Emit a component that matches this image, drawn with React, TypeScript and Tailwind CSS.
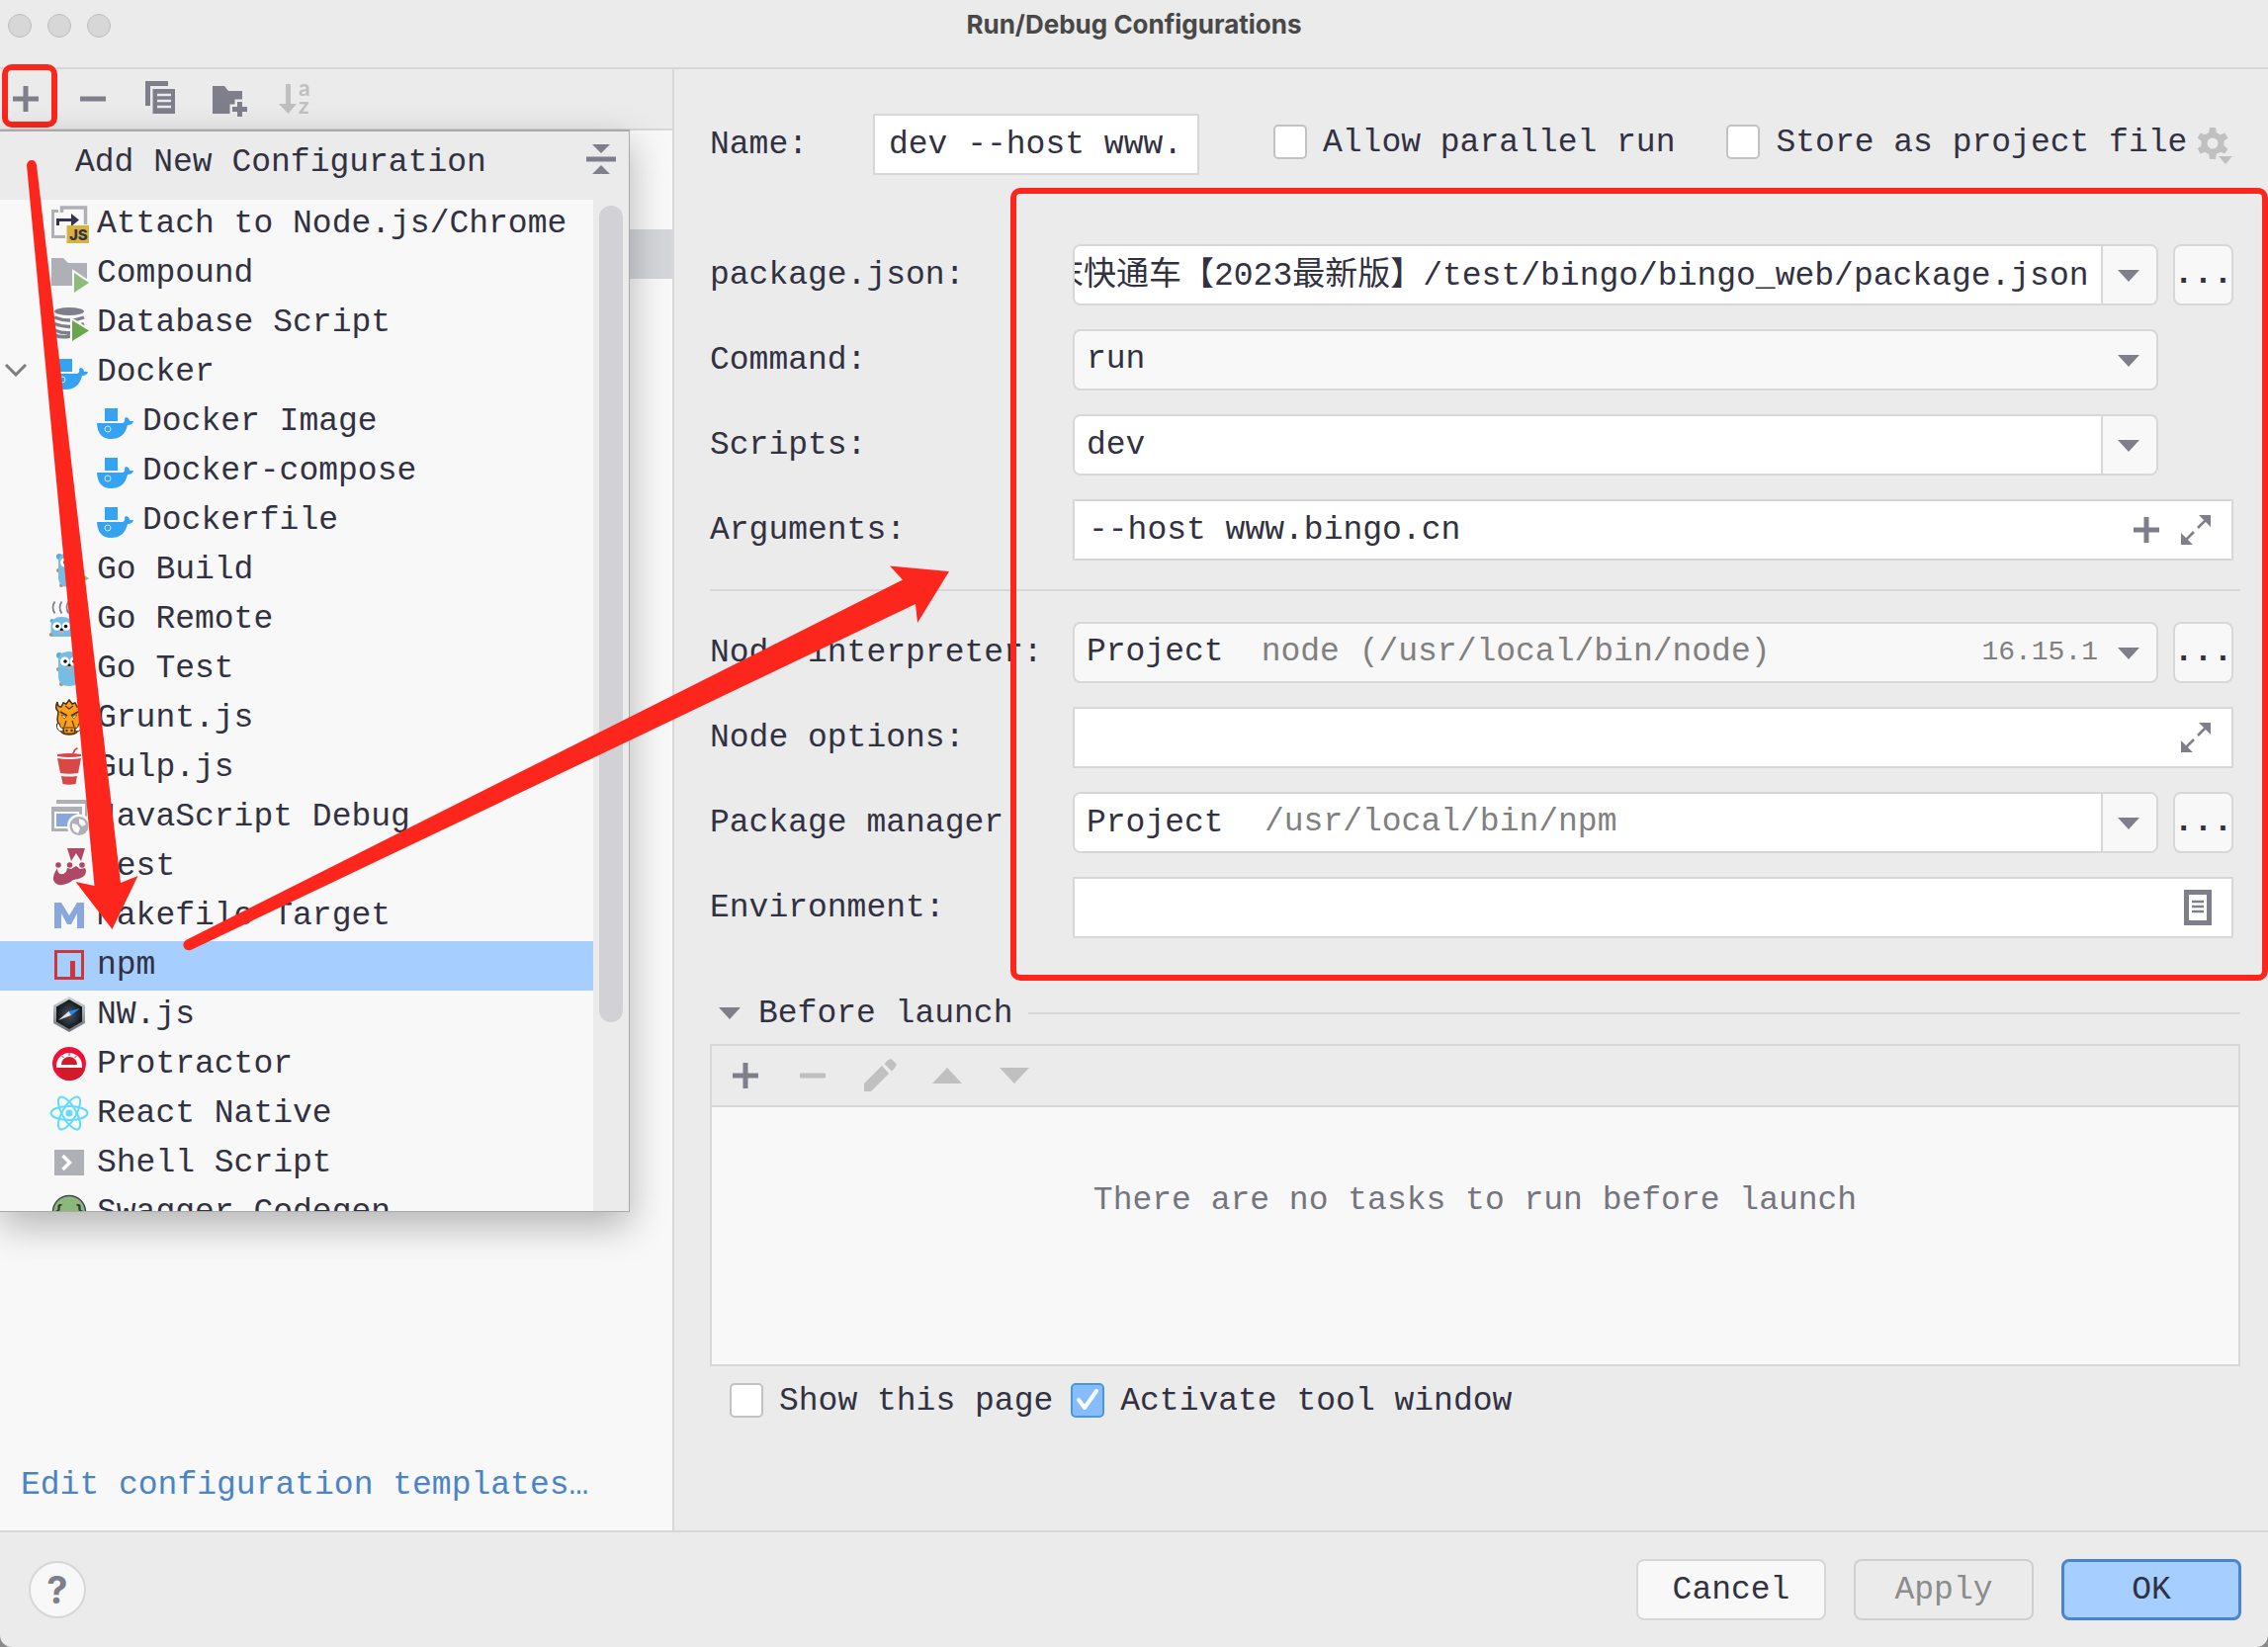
import { useEffect, useRef } from "react";
import type { ReactNode } from "react";

const ICON = "#7f7f8c";
const MUTED = "#c0c0c0";
const RED = "#fc261c";

/* ---------- toolbar glyphs ---------- */

function PlusIcon({ color = ICON }: { color?: string }) {
  return (
    <svg viewBox="0 0 36 36" className="h-9 w-9" aria-hidden="true">
      <path d="M15.500 5h5v10.500h10.500v5H20.500v10.500h-5V20.500H5v-5h10.500z" fill={color} />
    </svg>
  );
}

function MinusIcon({ color = ICON }: { color?: string }) {
  return (
    <svg viewBox="0 0 36 36" className="h-9 w-9" aria-hidden="true">
      <path d="M5 15.500h26v5H5z" fill={color} />
    </svg>
  );
}

function CopyIcon() {
  return (
    <svg viewBox="0 0 36 36" className="h-9 w-9" aria-hidden="true">
      <path d="M3 0h23v5H8v20H3z" fill={ICON} />
      <path d="M10.500 8H33v25H10.500z" fill={ICON} />
      <path d="M15 14h14M15 20h14M15 26h14" stroke="#ebebeb" strokeWidth="2.500" />
    </svg>
  );
}

function FolderPlusIcon() {
  return (
    <svg viewBox="0 0 36 36" className="h-9 w-9 overflow-visible" aria-hidden="true">
      <path d="M3 5h12l4 5h14v23H3z" fill={ICON} />
      <path d="M28 21h5v5h5v5h-5v5h-5v-5h-5v-5h5z" fill={ICON} stroke="#ebebeb" strokeWidth="5" paintOrder="stroke" />
    </svg>
  );
}

function SortIcon() {
  return (
    <svg viewBox="0 0 36 36" className="h-9 w-9 overflow-visible" aria-hidden="true">
      <path d="M9 3h5v20h6L11.500 33 2 23h7z" fill={MUTED} />
      <text x="22" y="15" fontSize="23" fontWeight="700" fontFamily="Lato, sans-serif" fill={MUTED}>a</text>
      <text x="22" y="33" fontSize="23" fontWeight="700" fontFamily="Lato, sans-serif" fill={MUTED}>z</text>
    </svg>
  );
}

function PencilIcon() {
  return (
    <svg viewBox="0 0 36 36" className="h-9 w-9" aria-hidden="true">
      <path d="M2 34v-8L20 8l7 8L9 34zM22.500 6l3.500-3.500q2.500-2.500 5 0L33.500 5q2 2 0 4.500L30 13.500z" fill={MUTED} />
    </svg>
  );
}

function Triangle({ up = false, color = ICON, big = false }: { up?: boolean; color?: string; big?: boolean }) {
  return (
    <svg viewBox="0 0 30 16" className={big ? "h-4 w-[30px]" : "h-3 w-[22px]"} preserveAspectRatio="none" aria-hidden="true">
      <path d={up ? "M0 16L15 0l15 16z" : "M0 0h30L15 16z"} fill={color} />
    </svg>
  );
}

function GearIcon() {
  const teeth = [0, 60, 120, 180, 240, 300];
  return (
    <svg viewBox="0 0 38 38" className="h-[38px] w-[38px]" aria-hidden="true">
      <g fill={MUTED}>
        {teeth.map((a) => (
          <path key={a} d="M12 8L13 1h6l1 7z" transform={`rotate(${a} 16 17)`} />
        ))}
        <path fillRule="evenodd" d="M16 5.500a11.500 11.500 0 1 1 0 23a11.500 11.500 0 0 1 0-23zM16 11.500a5.500 5.500 0 1 0 0 11a5.500 5.500 0 0 0 0-11z" />
        <path d="M20 27h18l-9 11z" fill="#ebebeb" />
        <path d="M22 30h14l-7 8z" />
      </g>
    </svg>
  );
}

function ExpandIcon() {
  return (
    <svg viewBox="0 0 32 32" className="h-8 w-8" aria-hidden="true">
      <path d="M19 1h12v12zM1 19v12h12z" fill={ICON} />
      <path d="M18 14L26 6M14 18L6 26" stroke={ICON} strokeWidth="2.500" />
    </svg>
  );
}

function DocumentIcon() {
  return (
    <svg viewBox="0 0 28 36" className="h-9 w-7" aria-hidden="true">
      <path d="M2.500 2.500h23v31h-23z" fill="none" stroke={ICON} strokeWidth="5" />
      <path d="M8 12h12M8 17h12M8 22h12" stroke={ICON} strokeWidth="2.500" />
    </svg>
  );
}

/* ---------- configuration type icons, 40 x 40 ---------- */

const play = (x: number, y: number, w: number, h: number, fill: string) => (
  <path d={`M${x} ${y}l${w} ${h / 2}l${-w} ${h / 2}z`} fill={fill} stroke="#f8f8f8" strokeWidth="4" paintOrder="stroke" />
);

const docker = (
  <g fill="#35a2f2">
    <path d="M10 6h13v13H10z" />
    <path d="M2 21h26q3-1 2-5l2-1q3 1 3 4h4q-1 4-6 4Q30 37 16 37 3 37 2 21z" />
    <circle cx="13" cy="27" r="3" fill="none" stroke="#d5ebfc" strokeWidth="1" />
  </g>
);

const gopher = (
  <g>
    <circle cx="10" cy="6" r="3" fill="#5ba9d6" />
    <circle cx="30" cy="6" r="3" fill="#5ba9d6" />
    <circle cx="9" cy="20" r="2" fill="#b88b70" />
    <circle cx="12" cy="35" r="2" fill="#b88b70" />
    <path d="M9 12Q9 2 20 2t11 10v15q0 10-11 10T9 27z" fill="#77bce4" />
    <circle cx="15.500" cy="12" r="4.500" fill="#fff" />
    <circle cx="25" cy="12" r="4.500" fill="#fff" />
    <circle cx="16" cy="12" r="1.800" fill="#111" />
    <circle cx="25" cy="12" r="1.800" fill="#111" />
    <circle cx="20" cy="16" r="1.500" fill="#111" />
    <circle cx="20" cy="18.500" r="1.800" fill="#d8a88c" />
  </g>
);

const icons: Record<string, ReactNode> = {
  attach: (
    <g>
      <path d="M9 6.500H3.500v26H16" fill="none" stroke="#afb0b6" strokeWidth="3" />
      <path d="M12.500 8V3h24v17" fill="none" stroke="#afb0b6" strokeWidth="3.500" />
      <path d="M8.500 21v-5.500H24" fill="none" stroke="#33334a" strokeWidth="3" />
      <path d="M22 9l8 6.500-8 6.500z" fill="#33334a" />
      <path d="M17.500 21H40v18H17.500z" fill="#d6b240" />
      <text x="20" y="36" fontSize="15" fontWeight="800" fontFamily="Inter, sans-serif" fill="#33334a">JS</text>
    </g>
  ),
  compound: (
    <g>
      <path d="M2 4h12l5 5h19v23H2z" fill="#afb0b6" />
      {play(25, 19, 15, 20, "#90bb7d")}
    </g>
  ),
  database: (
    <g>
      <ellipse cx="20" cy="8" rx="15" ry="4" fill={ICON} />
      <path d="M5 14q15 6 30 0M5 20.500q15 6 30 0M5 27q8 3.500 18 2.500M5 32q8 3 16 1" fill="none" stroke={ICON} strokeWidth="3.500" />
      {play(23, 17, 17, 21, "#6ba54e")}
    </g>
  ),
  docker,
  goBuild: (
    <g>
      {gopher}
      {play(25, 18, 15, 20, "#90bb7d")}
    </g>
  ),
  goRemote: (
    <g>
      <path d="M5.500 1.500q-4 6 0 12M12.500 1.500q-4 6 0 12M19.500 1.500q-4 6 0 12" fill="none" stroke={ICON} strokeWidth="1.800" />
      <circle cx="2.500" cy="21" r="2" fill="#5ba9d6" />
      <path d="M1.500 37V26q0-9 11-9t11 9v11z" fill="#77bce4" />
      <circle cx="1.500" cy="35" r="1.800" fill="#b88b70" />
      <circle cx="7.500" cy="26.500" r="4.300" fill="#fff" />
      <circle cx="17" cy="26.500" r="4.300" fill="#fff" />
      <circle cx="8" cy="26.500" r="1.800" fill="#111" />
      <circle cx="16.500" cy="26.500" r="1.800" fill="#111" />
      <circle cx="12.300" cy="30" r="1.500" fill="#111" />
      <circle cx="12.300" cy="32.500" r="1.800" fill="#d8a88c" />
    </g>
  ),
  goTest: gopher,
  grunt: (
    <g>
      <path d="M8 3q0 5 4 5l2-4 3 1 3-4 3 4 3-1 2 4q4 0 4-5 3 6-1 10l1 8-2 8q-1 7-10 7t-10-7l-2-8 1-8Q5 9 8 3z" fill="#fa9f1c" stroke="#4a3312" strokeWidth="1.500" />
      <path d="M11 13l7 4M29 13l-7 4" stroke="#4a3312" strokeWidth="1.800" />
      <path d="M12 16l5 2-2 2zM28 16l-5 2 2 2z" fill="#fff" stroke="#4a3312" strokeWidth=".6" />
      <path d="M16 7l4 3 4-3M17 22l-2 6M23 22l2 6" fill="none" stroke="#4a3312" strokeWidth="1.200" />
      <path d="M7.500 25q-1 8 6 8l1-3q-4 0-4-5zM32.500 25q1 8-6 8l-1-3q4 0 4-5z" fill="#fff" stroke="#4a3312" strokeWidth="1" />
      <path d="M14 29h12l-1 6H15z" fill="#fa9f1c" stroke="#4a3312" strokeWidth="1.200" />
      <circle cx="17.500" cy="32" r="1.200" fill="#4a3312" />
      <circle cx="22.500" cy="32" r="1.200" fill="#4a3312" />
    </g>
  ),
  gulp: (
    <g fill="#da4747">
      <path d="M23 5l2-4 3-2 1 1.500-2.500 1.500-1.500 3z" />
      <path d="M8 6q12-2 24 0v2q-12 2-24 0z" />
      <path d="M8 10q12 2 24 0l-3 15q-9 1.500-18 0z" />
      <path d="M12 28q8 1 16 0l-1.500 8q-6.500 1.500-13 0z" />
    </g>
  ),
  jsDebug: (
    <g>
      <path d="M7 2h31v22h-2V6H7z" fill="#afb0b6" />
      <path d="M2 9h31v25H2zM5 14v17h25V14z" fill="#afb0b6" fillRule="evenodd" />
      <path d="M7 16h21v13H7z" fill="#89a6dd" />
      <circle cx="30" cy="28.500" r="12" fill="#f8f8f8" />
      <circle cx="30" cy="28.500" r="9.500" fill="#afb0b6" />
      <path d="M23 26l5 1 3 4-2 5-4-2-2-4zM30 21l5 2 2 4-4 2-3-3z" fill="#f8f8f8" />
    </g>
  ),
  jest: (
    <g fill="#b04766">
      <path d="M18 1h18l-4 13-5-8-5 8z" />
      <circle cx="9" cy="18" r="2.800" />
      <circle cx="20.500" cy="18" r="2.800" />
      <circle cx="33" cy="18" r="2.800" />
      <path d="M8 21Q3 29 4 33q2 6 9 5 7-1 11-5 9-1 12-5 2-4 0-7l-5 1-4-3-5 3-4-1q-1 7-7 6-3-1-3-6z" />
    </g>
  ),
  makefile: <path d="M5 32V6h7l8 13 8-13h7v26h-7V17l-6 11h-4l-6-11v15z" fill="#89a6dd" />,
  npm: (
    <g>
      <path d="M6.500 5.500h27v27h-27z" fill="none" stroke="#cb3837" strokeWidth="3" />
      <path d="M21 15h5v16h-5z" fill="#cb3837" />
    </g>
  ),
  nw: (
    <g>
      <defs>
        <linearGradient id="nwEdge" x1="0" y1="0" x2="0" y2="1">
          <stop offset="0" stopColor="#d4d6d8" />
          <stop offset="1" stopColor="#6f7276" />
        </linearGradient>
        <radialGradient id="nwFace">
          <stop offset="0" stopColor="#4b5563" />
          <stop offset="1" stopColor="#14171c" />
        </radialGradient>
      </defs>
      <path d="M20 1l16 9v18l-16 9-16-9V10z" fill="url(#nwEdge)" />
      <path d="M20 4l13 7.500v15L20 34 7 26.500v-15z" fill="url(#nwFace)" />
      <path d="M31 13l-9 7-2.500-4z" fill="#1d8bf5" />
      <path d="M9 25l10.500-9 2.500 4z" fill="#e2e4e6" />
    </g>
  ),
  protractor: (
    <g>
      <circle cx="20" cy="19" r="17" fill="#f01236" />
      <path d="M8 23h24l4 2q-4 11-16 11-4 0-7-2z" fill="#d31a2b" />
      <path d="M7 21a13 13 0 0 1 26 0v2H7z" fill="#fff" />
      <path d="M12 20a8 8 0 0 1 16 0z" fill="#d31a2b" />
      <path d="M20 8v3M12.500 11l2 2M27.500 11l-2 2" stroke="#f01236" strokeWidth="1" />
    </g>
  ),
  react: (
    <g fill="none" stroke="#61dafb" strokeWidth="2">
      <ellipse cx="20" cy="19" rx="18.500" ry="7" />
      <ellipse cx="20" cy="19" rx="18.500" ry="7" transform="rotate(60 20 19)" />
      <ellipse cx="20" cy="19" rx="18.500" ry="7" transform="rotate(120 20 19)" />
      <circle cx="20" cy="19" r="3.500" fill="#61dafb" stroke="none" />
    </g>
  ),
  shell: (
    <g>
      <path d="M5 6h30v26H5z" fill="#afb0b6" />
      <path d="M13.500 12l7 7-7 7" fill="none" stroke="#fff" strokeWidth="3.500" />
    </g>
  ),
  swagger: (
    <g>
      <circle cx="20" cy="19" r="16.500" fill="#8cb97b" stroke="#46464f" strokeWidth="1.500" />
      <text x="20" y="23" textAnchor="middle" fontSize="17" fontWeight="700" fontFamily="Liberation Sans, sans-serif" fill="#2f3a35">{"{...}"}</text>
    </g>
  ),
};

type Item = { label: string; icon: string; child?: boolean; open?: boolean };

const items: Item[] = [
  { label: "Attach to Node.js/Chrome", icon: "attach" },
  { label: "Compound", icon: "compound" },
  { label: "Database Script", icon: "database" },
  { label: "Docker", icon: "docker", open: true },
  { label: "Docker Image", icon: "docker", child: true },
  { label: "Docker-compose", icon: "docker", child: true },
  { label: "Dockerfile", icon: "docker", child: true },
  { label: "Go Build", icon: "goBuild" },
  { label: "Go Remote", icon: "goRemote" },
  { label: "Go Test", icon: "goTest" },
  { label: "Grunt.js", icon: "grunt" },
  { label: "Gulp.js", icon: "gulp" },
  { label: "JavaScript Debug", icon: "jsDebug" },
  { label: "Jest", icon: "jest" },
  { label: "Makefile Target", icon: "makefile" },
  { label: "npm", icon: "npm" },
  { label: "NW.js", icon: "nw" },
  { label: "Protractor", icon: "protractor" },
  { label: "React Native", icon: "react" },
  { label: "Shell Script", icon: "shell" },
  { label: "Swagger Codegen", icon: "swagger" },
];

function AddConfigurationPopup() {
  return (
    <div className="absolute top-[61px] left-0 z-10 flex h-[1095px] w-[637px] flex-col overflow-hidden border-t-2 border-r border-b border-[#a9a9ab] bg-[#ebebeb] shadow-[0_14px_36px_rgba(0,0,0,0.28)]">
      <div className="flex h-[69px] shrink-0 items-start justify-between pr-3 pl-[76px]">
        <h2 className="leading-[64px]">Add New Configuration</h2>
        <button type="button" aria-label="Collapse all" className="mt-3">
          <svg viewBox="0 0 32 32" className="h-8 w-8" aria-hidden="true">
            <path d="M7 1h18l-9 9zM7 31h18l-9-9zM1 13.500h30v5H1z" fill={ICON} />
          </svg>
        </button>
      </div>
      <div className="flex min-h-0 flex-1">
        <ul className="min-w-0 flex-1 overflow-hidden bg-[#f8f8f8]">
          {items.map((item) => (
            <li key={item.label}>
              <button
                type="button"
                className={`flex h-[50px] w-full items-center gap-2 text-left leading-[50px] whitespace-nowrap ${item.label === "npm" ? "bg-[#a6ceff]" : ""} ${item.child ? "pl-24" : item.open ? "pl-1" : "pl-[50px]"}`}
              >
                {item.open && (
                  <svg viewBox="0 0 24 14" className="mr-3.5 mb-1.5 h-3.5 w-6" aria-hidden="true">
                    <path d="M2 2l10 10L22 2" fill="none" stroke="#7d7d7d" strokeWidth="3" />
                  </svg>
                )}
                <svg viewBox="0 0 40 40" className="h-10 w-10 shrink-0 overflow-visible" aria-hidden="true">
                  {icons[item.icon]}
                </svg>
                {item.label}
              </button>
            </li>
          ))}
        </ul>
        <div className="w-9 shrink-0 pt-1.5">
          <div className="mx-auto h-[826px] w-6 rounded-full bg-[#d1d1d6]" />
        </div>
      </div>
    </div>
  );
}

/* ---------- form pieces ---------- */

function Check({ id, label, checked = false }: { id: string; label: string; checked?: boolean }) {
  return (
    <div className="flex items-center gap-4">
      <span className="relative flex h-[35px] w-[34px]">
        <input
          id={id}
          type="checkbox"
          defaultChecked={checked}
          className="h-full w-full appearance-none rounded-[5px] border-2 border-[#c2c2c2] bg-white checked:border-[#4b97dd] checked:bg-[#86bdff]"
        />
        {checked && (
          <svg viewBox="0 0 34 35" className="pointer-events-none absolute inset-0" aria-hidden="true">
            <path d="M8 17l6 8L26 8" fill="none" stroke="#fff" strokeWidth="4" strokeLinecap="round" strokeLinejoin="round" />
          </svg>
        )}
      </span>
      <label htmlFor={id} className="pt-1 whitespace-nowrap">{label}</label>
    </div>
  );
}

function Row({ id, label, more, full, children }: { id: string; label: string; more?: boolean; full?: boolean; children: ReactNode }) {
  return (
    <div className="flex h-[62px] items-center pr-[7px]">
      <label htmlFor={id} className="w-[367px] shrink-0 pt-0.5 whitespace-nowrap">{label}</label>
      <div className={`relative flex h-full min-w-0 flex-1 items-center border-2 border-[#d7d7d7] ${full ? "bg-white" : "overflow-hidden rounded-lg bg-[#f8f8f8]"} ${full || more ? "" : "mr-[76px]"}`}>
        {children}
      </div>
      {more && (
        <button type="button" aria-label={`Browse ${label}`} className="ml-[15px] h-full w-[61px] overflow-hidden rounded-lg border-2 border-[#d7d7d7] bg-[#f8f8f8] font-bold">
          <span className="flex justify-center">...</span>
        </button>
      )}
    </div>
  );
}

function DropButton({ label }: { label: string }) {
  return (
    <button type="button" aria-label={label} className="flex h-full w-14 shrink-0 items-center justify-center border-l-2 border-[#d7d7d7] bg-[#f8f8f8] pt-0.5 pr-0.5">
      <Triangle />
    </button>
  );
}

function ToolButton({ label, children }: { label: string; children: ReactNode }) {
  return (
    <button type="button" aria-label={label} className="flex h-9 w-9 items-center justify-center">
      {children}
    </button>
  );
}

export default function App() {
  const pathRef = useRef<HTMLInputElement>(null);
  useEffect(() => {
    if (pathRef.current) pathRef.current.scrollLeft = pathRef.current.scrollWidth;
  }, []);

  return (
    <div className="bg-[#8a8a8a]">
      <div className="relative flex min-h-screen flex-col overflow-hidden rounded-b-xl bg-[#ebebeb] font-['Liberation_Mono','Noto_Sans_CJK_SC',monospace] text-[33px] leading-[50px] text-[#313142]">
        <header className="relative flex h-[70px] shrink-0 items-start justify-center border-b-2 border-[#d7d7d7]">
          <div className="absolute top-3.5 left-2 flex gap-4">
            <span className="h-6 w-6 rounded-full border border-[#bebebe] bg-[#d7d7d7]" />
            <span className="h-6 w-6 rounded-full border border-[#bebebe] bg-[#d7d7d7]" />
            <span className="h-6 w-6 rounded-full border border-[#bebebe] bg-[#d7d7d7]" />
          </div>
          <h1 className="font-['Inter',sans-serif] text-[26px] font-bold text-[#484848]">Run/Debug Configurations</h1>
        </header>

        <main className="flex flex-1">
          <aside className="relative flex w-[682px] shrink-0 flex-col border-r-2 border-[#d7d7d7] bg-[#f8f8f8]">
            <div className="flex h-[62px] items-center gap-8 border-b-2 border-[#d7d7d7] bg-[#ebebeb] pl-2">
              <div className="relative flex">
                <ToolButton label="Add New Configuration"><PlusIcon /></ToolButton>
                <span className="pointer-events-none absolute -top-[17px] -left-1.5 h-16 w-14 rounded-[10px] border-[6px] border-[#fc261c]" />
              </div>
              <ToolButton label="Remove"><MinusIcon /></ToolButton>
              <ToolButton label="Copy"><CopyIcon /></ToolButton>
              <ToolButton label="New folder"><FolderPlusIcon /></ToolButton>
              <ToolButton label="Sort"><SortIcon /></ToolButton>
            </div>
            <div className="mt-[100px] h-[50px] bg-[#d4d6da]" />
            <a href="#templates" className="mt-auto mb-5 pl-[21px] text-[#4a84c6]">Edit configuration templates…</a>
            <AddConfigurationPopup />
          </aside>

          <section className="flex min-w-0 flex-1 flex-col pt-[45px] pr-7 pl-9">
            <div className="flex h-[62px] items-center">
              <label htmlFor="name" className="w-[165px] shrink-0 pt-0.5">Name:</label>
              <input id="name" defaultValue="dev --host www." className="h-full w-[330px] border-2 border-[#d7d7d7] bg-white px-3.5" />
              <div className="ml-[75px] flex gap-[52px] pb-1.5">
                <Check id="parallel" label="Allow parallel run" />
                <Check id="store" label="Store as project file" />
              </div>
              <button type="button" aria-label="Storage settings" className="ml-2.5 pt-0.5"><GearIcon /></button>
            </div>

            <div className="relative mt-[70px] flex flex-col">
              <div className="flex flex-col gap-6">
                <Row id="pkg" label="package.json:" more>
                  <div className="flex h-full min-w-0 flex-1 bg-white pr-3">
                    <input
                      id="pkg"
                      ref={pathRef}
                      defaultValue="末快通车【2023最新版】/test/bingo/bingo_web/package.json"
                      className="h-full w-full pb-2"
                    />
                  </div>
                  <DropButton label="Choose package.json" />
                </Row>
                <Row id="command" label="Command:">
                  <select id="command" className="h-full w-full appearance-none bg-transparent px-3">
                    <option>run</option>
                  </select>
                  <span className="pointer-events-none absolute right-[17px] pt-0.5"><span className="flex"><Triangle /></span></span>
                </Row>
                <Row id="scripts" label="Scripts:">
                  <input id="scripts" defaultValue="dev" className="h-full min-w-0 flex-1 bg-white px-3" />
                  <DropButton label="Choose script" />
                </Row>
                <Row id="args" label="Arguments:" full>
                  <input id="args" defaultValue="--host www.bingo.cn" className="h-full min-w-0 flex-1 px-3.5" />
                  <button type="button" aria-label="Insert macro" className="mr-4"><PlusIcon /></button>
                  <button type="button" aria-label="Expand arguments" className="mr-5"><ExpandIcon /></button>
                </Row>
              </div>
              <hr className="mt-[29px] mb-[31px] border-t-2 border-[#d7d7d7]" />
              <div className="flex flex-col gap-6">
                <Row id="interpreter" label="Node interpreter:" more>
                  <button id="interpreter" type="button" aria-haspopup="listbox" className="flex h-full w-full items-center pr-[17px] pl-3 text-left">
                    <span>Project</span>
                    <span className="ml-[38px] flex-1 text-[#808080]">node (/usr/local/bin/node)</span>
                    <span className="text-[28px] text-[#808080]">16.15.1</span>
                    <span className="ml-5 pt-0.5"><Triangle /></span>
                  </button>
                </Row>
                <Row id="options" label="Node options:" full>
                  <input id="options" className="h-full min-w-0 flex-1 px-3.5" />
                  <button type="button" aria-label="Expand node options" className="mr-5"><ExpandIcon /></button>
                </Row>
                <Row id="manager" label="Package manager:" more>
                  <div className="flex h-full min-w-0 flex-1 items-center bg-white pl-3">
                    <input id="manager" defaultValue="Project" className="h-full w-[180px]" />
                    <span className="text-[#808080]">/usr/local/bin/npm</span>
                  </div>
                  <DropButton label="Choose package manager" />
                </Row>
                <Row id="env" label="Environment:" full>
                  <input id="env" className="h-full min-w-0 flex-1 px-3.5" />
                  <button type="button" aria-label="Edit environment" className="mr-5"><DocumentIcon /></button>
                </Row>
              </div>
              <div className="pointer-events-none absolute -top-[57px] -right-7 -bottom-[43px] left-[304px] rounded-[10px] border-[6px] border-[#fc261c]" />
            </div>

            <div className="mt-[50px] flex items-center">
              <button type="button" className="flex items-center gap-[18px] pl-[9px]">
                <Triangle />
                <span className="pt-0.5">Before launch</span>
              </button>
              <div className="ml-4 h-0.5 flex-1 bg-[#d7d7d7]" />
            </div>
            <div className="mt-[5px] border-2 border-[#d7d7d7]">
              <div className="flex h-[62px] items-center gap-8 border-b-2 border-[#d7d7d7] pl-4">
                <ToolButton label="Add task"><PlusIcon /></ToolButton>
                <ToolButton label="Remove task"><MinusIcon color={MUTED} /></ToolButton>
                <ToolButton label="Edit task"><PencilIcon /></ToolButton>
                <ToolButton label="Move up"><Triangle up big color={MUTED} /></ToolButton>
                <ToolButton label="Move down"><Triangle big color={MUTED} /></ToolButton>
              </div>
              <p className="h-[260px] bg-[#f8f8f8] pt-[70px] text-center text-[#75757f]">There are no tasks to run before launch</p>
            </div>
            <div className="mt-[7px] flex gap-[18px] pl-5">
              <Check id="show" label="Show this page" />
              <Check id="activate" label="Activate tool window" checked />
            </div>
          </section>
        </main>

        <footer className="flex h-[118px] shrink-0 items-center border-t-2 border-[#d7d7d7] pr-[27px] pl-[29px]">
          <button type="button" aria-label="Help" className="flex h-[58px] w-[58px] items-center justify-center rounded-full border-2 border-[#d7d7d7] bg-[#f8f8f8] font-['Inter',sans-serif] text-[38px] font-bold text-[#7f7f8c]">
            ?
          </button>
          <div className="ml-auto flex gap-7">
            <button type="button" className="h-[62px] w-[192px] rounded-lg border-2 border-[#d7d7d7] bg-[#f8f8f8] pt-0.5">Cancel</button>
            <button type="button" disabled className="h-[62px] w-[182px] rounded-lg border-2 border-[#cfcfcf] pt-0.5 text-[#8c8c8c]">Apply</button>
            <button type="button" className="h-[62px] w-[182px] rounded-lg border-[3px] border-[#4a84cf] bg-[#a6ceff] pt-0.5">OK</button>
          </div>
        </footer>

        <svg viewBox="0 0 980 980" className="pointer-events-none absolute top-0 left-0 z-20 h-[980px] w-[980px]" aria-hidden="true">
          <path d="M27 167q1-5 5-5t5 5L122 893l17.500-7L113.500 940 76.500 892l19 4z" fill={RED} />
          <path d="M188 951L913 586.500 900 572.500 960 578l-32 52-2-19L193 961q-5 1-7-3t2-7z" fill={RED} />
        </svg>
      </div>
    </div>
  );
}
